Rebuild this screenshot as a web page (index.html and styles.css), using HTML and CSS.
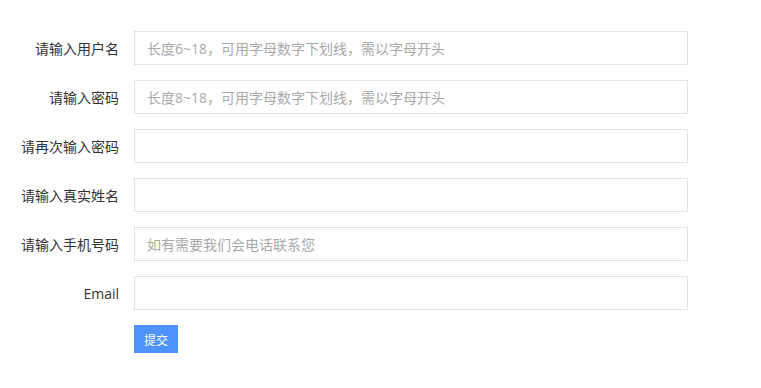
FILE: index.html
```html
<!DOCTYPE html>
<html lang="zh-CN">
<head>
    <meta charset="UTF-8">
    <title>注册</title>
    <link rel="stylesheet" href="styles.css">
</head>
<body>
    <form class="reg-form">
        <div class="form-row">
            <label class="form-label" for="username">请输入用户名</label>
            <input class="form-input" type="text" id="username" placeholder="长度6~18，可用字母数字下划线，需以字母开头">
        </div>
        <div class="form-row">
            <label class="form-label" for="password">请输入密码</label>
            <input class="form-input" type="password" id="password" placeholder="长度8~18，可用字母数字下划线，需以字母开头">
        </div>
        <div class="form-row">
            <label class="form-label" for="password2">请再次输入密码</label>
            <input class="form-input" type="password" id="password2">
        </div>
        <div class="form-row">
            <label class="form-label" for="realname">请输入真实姓名</label>
            <input class="form-input" type="text" id="realname">
        </div>
        <div class="form-row">
            <label class="form-label" for="phone">请输入手机号码</label>
            <input class="form-input" type="text" id="phone" placeholder="如有需要我们会电话联系您">
        </div>
        <div class="form-row">
            <label class="form-label" for="email">Email</label>
            <input class="form-input" type="text" id="email">
        </div>
        <div class="form-row">
            <span class="form-label"></span>
            <button class="submit-btn" type="submit">提交</button>
        </div>
    </form>
</body>
</html>
```

FILE: styles.css
```css
body {
    margin: 0;
    font-family: "Open Sans", "Noto Sans CJK SC", sans-serif;
    color: #333;
    background-color: #fff;
}
.reg-form {
    padding-top: 31px;
    display: flex;
    flex-direction: column;
    gap: 15px;
}
.form-row {
    display: flex;
    align-items: center;
}
.form-label {
    width: 119px;
    margin-right: 15px;
    text-align: right;
    font-size: 14px;
    color: #333;
}
.form-input {
    width: 554px;
    height: 34px;
    box-sizing: border-box;
    padding: 0 12px;
    border: 1px solid #e3e3e3;
    border-radius: 0;
    font-family: "Open Sans", "Noto Sans CJK SC", sans-serif;
    font-size: 14px;
    color: #333;
    outline: none;
}
.form-input::placeholder {
    color: #a9a9a9;
}
.submit-btn {
    width: 44px;
    height: 28px;
    padding: 0;
    border: none;
    border-radius: 0;
    background-color: #4e93fb;
    color: #fff;
    font-family: "Noto Sans CJK SC", sans-serif;
    font-size: 12px;
    cursor: pointer;
}
```
